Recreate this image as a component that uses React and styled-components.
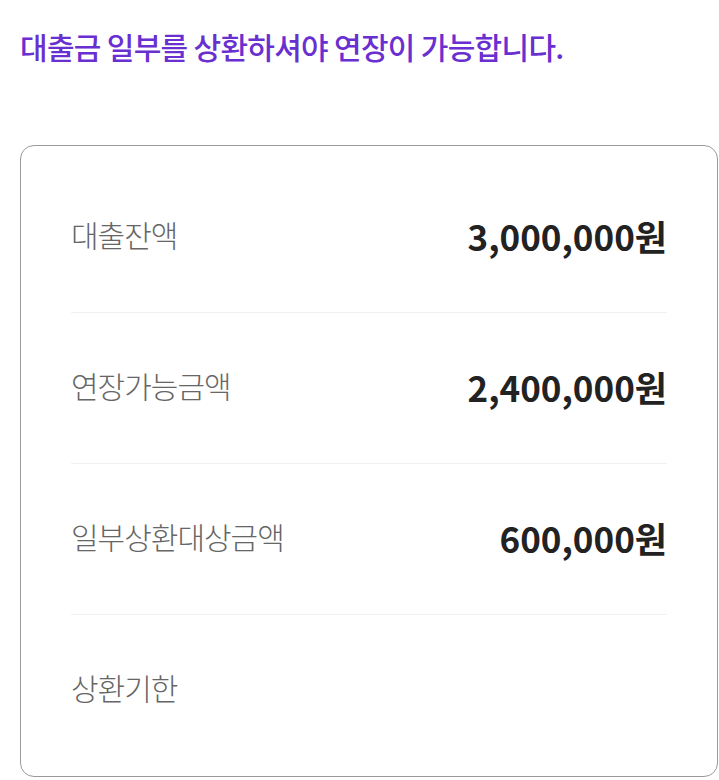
import React from "react";
import styled, { createGlobalStyle } from "styled-components";

const GlobalStyle = createGlobalStyle`
  body {
    margin: 0;
    background: #ffffff;
    font-family: "Noto Sans CJK KR", "Noto Sans", sans-serif;
  }
`;

const rows = [
  { label: "대출잔액", value: "3,000,000원" },
  { label: "연장가능금액", value: "2,400,000원" },
  { label: "일부상환대상금액", value: "600,000원" },
  { label: "상환기한", value: "" },
];

const App = () => {
  return (
    <Page>
      <GlobalStyle />
      <Title>대출금 일부를 상환하셔야 연장이 가능합니다.</Title>
      <Card>
        {rows.map((row, i) => (
          <Row key={row.label} last={i === rows.length - 1}>
            <Label>{row.label}</Label>
            <Value>{row.value}</Value>
          </Row>
        ))}
      </Card>
    </Page>
  );
};

const Page = styled.div`
  width: 719px;
  height: 780px;
  padding: 0 1px 0 20px;
  box-sizing: border-box;
  overflow: hidden;
`;

const Title = styled.h1`
  margin: 0;
  padding-top: 24px;
  height: 145px;
  box-sizing: border-box;
  font-size: 30px;
  font-weight: 500;
  color: #6a2fd0;
  letter-spacing: -0.7px;
`;

const Card = styled.div`
  border: 1.5px solid #9a9a9a;
  border-radius: 14px;
  padding: 16px 50px 10px;
  box-sizing: border-box;
  height: 632px;
`;

const Row = styled.div`
  display: flex;
  align-items: center;
  justify-content: space-between;
  height: 150px;
  border-bottom: ${(p) => (p.last ? "none" : "1px solid #f1f1f1")};
`;

const Label = styled.span`
  margin-bottom: 7px;
  font-size: 30px;
  font-weight: 300;
  color: #666666;
  letter-spacing: -1px;
`;

const Value = styled.span`
  margin-bottom: 3px;
  font-size: 35px;
  font-weight: 700;
  color: #222222;
  letter-spacing: 0;
`;

export default App;
